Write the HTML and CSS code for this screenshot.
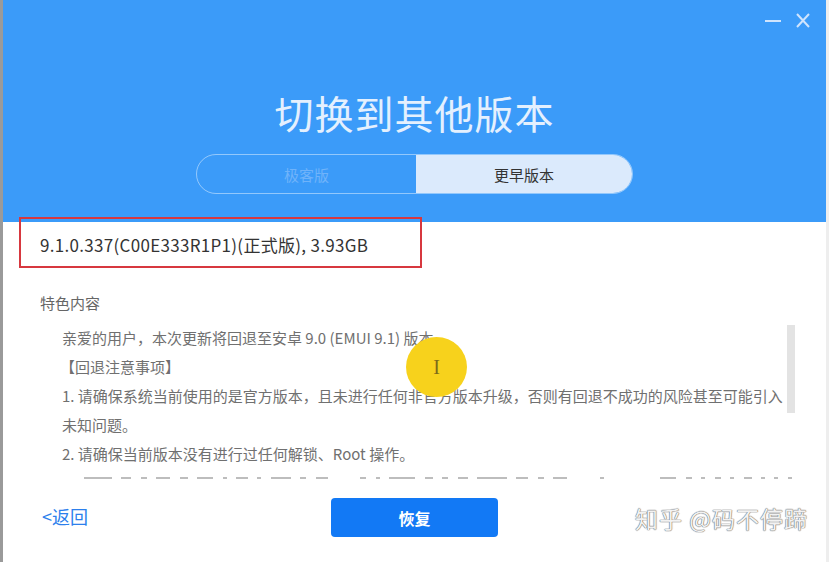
FILE: index.html
```html
<!DOCTYPE html>
<html lang="zh-CN">
<head>
<meta charset="utf-8">
<title>切换到其他版本</title>
<link rel="stylesheet" href="styles.css">
</head>
<body>
<div class="page">
  <div class="dialog">
    <header class="header">
      <div class="winctl">
        <svg class="ic-min" width="18" height="4" viewBox="0 0 18 4"><path d="M1 2H17" stroke="currentColor" stroke-width="2"/></svg>
        <svg class="ic-close" width="14" height="15" viewBox="0 0 14 15"><path d="M1 1L13 14M13 1L1 14" stroke="currentColor" stroke-width="2"/></svg>
      </div>
      <h1 class="title">切换到其他版本</h1>
      <div class="toggle">
        <span class="seg seg-off">极客版</span>
        <span class="seg seg-on">更早版本</span>
      </div>
    </header>

    <div class="version">
      <span>9.1.0.337(C00E333R1P1)(正式版), 3.93GB</span>
      <div class="annot"></div>
    </div>

    <div class="features-label">特色内容</div>
    <div class="scroll">
      <div class="scroll-text">
        <p>亲爱的用户，本次更新将回退至安卓 9.0 (EMUI 9.1) 版本。</p>
        <p class="bracket">【回退注意事项】</p>
        <p>1. 请确保系统当前使用的是官方版本，且未进行任何非官方版本升级，否则有回退不成功的风险甚至可能引入未知问题。</p>
        <p>2. 请确保当前版本没有进行过任何解锁、Root 操作。</p>
        <div class="cut" aria-hidden="true">
          <i style="width:28px"></i><i style="width:10px"></i><i style="width:6px"></i><i style="width:14px"></i><i style="width:8px"></i><i style="width:16px"></i><i style="width:4px"></i><i style="width:12px"></i><i style="width:4px"></i><i style="width:20px"></i><i style="width:6px"></i><i style="width:12px"></i><i class="gap"></i><i style="width:6px"></i><i style="width:4px"></i><i style="width:26px"></i><i style="width:8px"></i><i style="width:6px"></i><i style="width:10px"></i><i style="width:30px"></i><i style="width:12px"></i><i style="width:6px"></i><i style="width:14px"></i><i class="gap"></i><i style="width:4px"></i><i class="gap"></i><i class="gap"></i><i style="width:16px"></i><i style="width:6px"></i><i style="width:4px"></i><i style="width:6px"></i><i style="width:4px"></i><i style="width:8px"></i><i style="width:4px"></i><i style="width:4px"></i><i style="width:4px"></i>
        </div>
      </div>
      <div class="scrollbar"></div>
    </div>

    <footer class="footer">
      <a class="back">&lt;返回</a>
      <button class="restore">恢复</button>
      <span class="watermark">知乎 @码不停蹄</span>
    </footer>

    <div class="cursor-dot"><span>I</span></div>
  </div>
</div>
</body>
</html>
```

FILE: styles.css
```css
* { box-sizing: border-box; }
html, body { margin: 0; padding: 0; }
body {
  font-family: "Noto Sans CJK SC", "Noto Sans", "Liberation Sans", sans-serif;
  background: #dcdcdc;
}
.page {
  width: 829px;
  height: 562px;
  display: flex;
  padding: 0 3px;
  background: linear-gradient(to right, #9a9a9a 0, #9a9a9a 3px, #eeeeee 3px);
  overflow: hidden;
}
.dialog {
  flex: 1;
  background: #ffffff;
  display: flex;
  flex-direction: column;
  position: relative;
}
.header {
  height: 222px;
  background: #3b9bf9;
  display: flex;
  flex-direction: column;
  align-items: center;
  position: relative;
}
.winctl {
  position: absolute;
  top: 13px;
  right: 16px;
  display: flex;
  align-items: center;
  gap: 14px;
  color: #cfe4fd;
}
.ic-min { margin-top: 1px; }
.title {
  margin: 88px 0 0;
  font-size: 39px;
  line-height: 48px;
  font-weight: 400;
  color: #e4f0fe;
  letter-spacing: 1px;
}
.toggle {
  margin-top: 18px;
  width: 437px;
  height: 40px;
  border-radius: 20px;
  border: 1.5px solid rgba(255, 255, 255, 0.45);
  display: grid;
  grid-template-columns: 219px 1fr;
  overflow: hidden;
}
.seg {
  display: flex;
  align-items: center;
  justify-content: center;
  font-size: 15px;
}
.seg-off { color: #6fb3fa; }
.seg-on { background: #dbeafc; color: #333333; }

.version {
  position: relative;
  height: 46px;
  line-height: 46px;
  padding-left: 37px;
  font-size: 17px;
  letter-spacing: 0.3px;
  color: #333333;
}
.annot {
  position: absolute;
  left: 16px;
  top: -5px;
  width: 403px;
  height: 51px;
  border: 2px solid #d7383f;
}
.features-label {
  margin-top: 25px;
  padding-left: 37px;
  font-size: 15px;
  line-height: 20px;
  color: #666666;
}
.scroll {
  position: relative;
  margin-top: 10px;
  height: 160px;
  overflow: hidden;
}
.scroll-text {
  width: 790px;
  padding-left: 59px;
  font-size: 15px;
  line-height: 29px;
  color: #707070;
}
.scroll-text p { margin: 0; }
.bracket { margin-left: -2px !important; }
.cut {
  display: flex;
  gap: 6px;
  padding: 9px 0 0 22px;
  height: 29px;
  width: 730px;
  justify-content: space-between;
  filter: blur(0.6px);
}
.cut i {
  display: block;
  height: 2px;
  background: #bdbdbd;
}
.cut i.gap { width: 14px; background: transparent; }
.scrollbar {
  position: absolute;
  top: 2px;
  right: 31px;
  width: 8px;
  height: 88px;
  background: #e3e3e3;
}
.footer {
  flex: 1;
  display: grid;
  grid-template-columns: 1fr 167px 1fr;
  align-items: start;
  padding: 15px 18px 0 18px;
}
.back {
  margin: 6px 0 0 21px;
  font-size: 18px;
  line-height: 24px;
  color: #2c7fec;
}
.restore {
  width: 167px;
  height: 39px;
  border: none;
  border-radius: 4px;
  background: #1279f5;
  color: #ffffff;
  font-family: inherit;
  font-size: 16px;
  font-weight: 700;
}
.watermark {
  justify-self: end;
  margin-top: 5px;
  font-size: 23px;
  line-height: 30px;
  color: #f2f2f2;
  text-shadow: 0 0 1px #777, 0 0 1px #777, 0 0 1px #777;
  letter-spacing: 1px;
}
.cursor-dot {
  position: absolute;
  left: 403px;
  top: 337px;
  width: 61px;
  height: 60px;
  border-radius: 50%;
  background: #f7d21c;
  display: flex;
  align-items: center;
  justify-content: center;
}
.cursor-dot span {
  font-family: "Liberation Serif", serif;
  font-size: 20px;
  color: #7d6a1a;
}
```
